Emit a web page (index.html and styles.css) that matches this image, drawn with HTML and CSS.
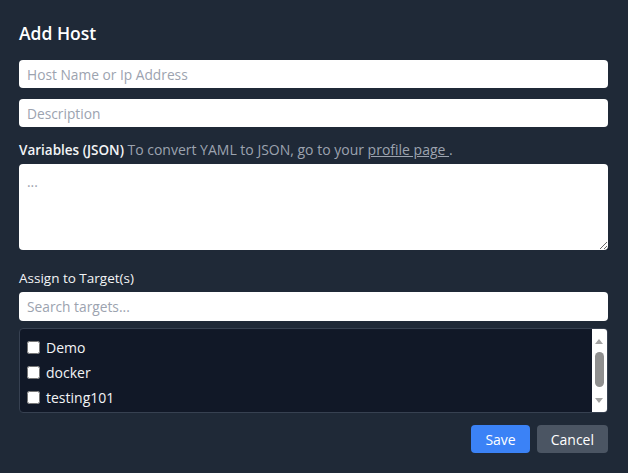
FILE: index.html
```html
<!DOCTYPE html>
<html lang="en">
<head>
<meta charset="utf-8">
<title>Add Host</title>
<link rel="stylesheet" href="styles.css">
</head>
<body>
<div class="modal">
  <h2 class="title">Add Host</h2>
  <input class="field" type="text" placeholder="Host Name or Ip Address">
  <input class="field" type="text" placeholder="Description">
  <label class="label"><strong class="label-strong">Variables (JSON)</strong> <span class="hint">To convert YAML to JSON, go to your <a class="link" href="#">profile page </a>.</span></label>
  <textarea class="field area" placeholder="..."></textarea>
  <label class="label label-assign">Assign to Target(s)</label>
  <input class="field field-search" type="text" placeholder="Search targets...">
  <div class="target-list">
    <ul class="targets">
      <li class="target"><input class="check" type="checkbox"><span>Demo</span></li>
      <li class="target"><input class="check" type="checkbox"><span>docker</span></li>
      <li class="target"><input class="check" type="checkbox"><span>testing101</span></li>
    </ul>
    <div class="scrollbar" aria-hidden="true">
      <span class="arrow arrow-up"></span>
      <span class="thumb"></span>
      <span class="arrow arrow-down"></span>
    </div>
  </div>
  <div class="actions">
    <button class="btn btn-save" type="button">Save</button>
    <button class="btn btn-cancel" type="button">Cancel</button>
  </div>
</div>
</body>
</html>
```
FILE: styles.css
```css
html, body {
  margin: 0;
  padding: 0;
  background: #1f2937;
}
body {
  font-family: "Open Sans", "Noto Sans", sans-serif;
  font-size: 14px;
  color: #f3f4f6;
}
.modal {
  width: 628px;
  height: 473px;
  box-sizing: border-box;
  padding: 19px 20px 0 19px;
  display: flex;
  flex-direction: column;
}
.title {
  margin: 0 0 13px 0;
  font-size: 17.5px;
  line-height: 28px;
  font-weight: 600;
  color: #ffffff;
}
.field {
  display: block;
  box-sizing: border-box;
  width: 100%;
  height: 28px;
  margin: 0 0 11px 0;
  padding: 0 8px;
  border: 0;
  border-radius: 4px;
  background: #ffffff;
  color: #111827;
  font-family: inherit;
  font-size: 13.75px;
  outline: none;
  flex: none;
}
.field::placeholder {
  color: #9ca3af;
}
.label {
  display: block;
  line-height: 20px;
  margin: 2px 0 4px 0;
  color: #f3f4f6;
  font-size: 13.5px;
}
.label-strong {
  font-weight: 600;
}
.hint {
  color: #9ca3af;
  font-size: 14px;
}
.link {
  color: #9ca3af;
  text-decoration: underline;
}
.area {
  height: 86px;
  padding: 8px;
  resize: vertical;
  margin-bottom: 16px;
}
.field-search {
  height: 29px;
}
.target-list {
  position: relative;
  box-sizing: border-box;
  height: 85px;
  margin-top: -4px;
  border: 1px solid #374151;
  border-radius: 4px;
  background: #111827;
  overflow: hidden;
  flex: none;
}
.targets {
  list-style: none;
  margin: 0;
  padding: 6px 22px 6px 7px;
}
.target {
  display: flex;
  align-items: center;
  gap: 6px;
  height: 25px;
  color: #f3f4f6;
}
.check {
  width: 13px;
  height: 13px;
  margin: 0;
}
.scrollbar {
  position: absolute;
  top: 0;
  right: 0;
  bottom: 0;
  width: 15px;
  background: #ffffff;
}
.arrow {
  position: absolute;
  left: 3px;
  width: 0;
  height: 0;
  border-left: 4.5px solid transparent;
  border-right: 4.5px solid transparent;
}
.arrow-up {
  top: 10px;
  border-bottom: 5px solid #a3a3a3;
}
.arrow-down {
  bottom: 9px;
  border-top: 5px solid #a3a3a3;
}
.thumb {
  position: absolute;
  left: 3px;
  top: 23px;
  width: 9px;
  height: 35px;
  border-radius: 5px;
  background: #8f8f8f;
}
.actions {
  display: flex;
  justify-content: flex-end;
  gap: 7px;
  margin-top: 12px;
}
.btn {
  height: 28px;
  padding: 0 14px;
  border: 0;
  border-radius: 4px;
  color: #ffffff;
  font-family: inherit;
  font-size: 14px;
  cursor: pointer;
}
.btn-save {
  background: #3b82f6;
}
.btn-cancel {
  background: #4b5563;
}
```
